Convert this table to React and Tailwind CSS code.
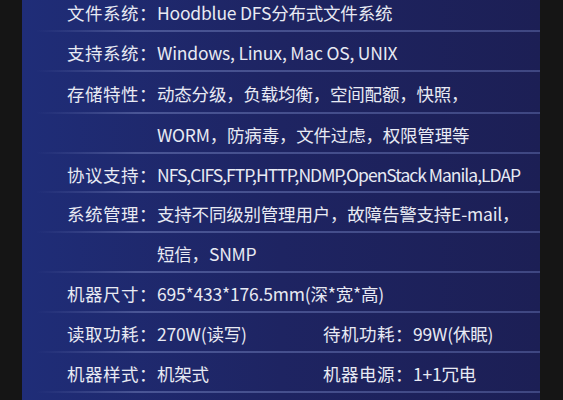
import React from "react";

const Row = ({ children, h = "h-[40px]" }) => (
  <div className={`relative ${h} flex items-center pt-[2px]`}>
    <div className="flex items-center pl-[45px] text-[17.5px] leading-[22px] text-[#e8eaf3] whitespace-nowrap">
      {children}
    </div>
    <div className="absolute left-[14px] right-0 bottom-0 h-[2px] bg-gradient-to-r from-transparent via-[#6673b0]/60 via-20% to-[#5b67a6]/55" />
  </div>
);

const Label = ({ children }) => (
  <span className="w-[90px] shrink-0 tracking-[0.5px]">{children}</span>
);

const Val = ({ children, cls = "" }) => (
  <span className={`tracking-[-0.2px] ${cls}`}>{children}</span>
);

export default function App() {
  return (
    <div
      className="w-[563px] h-[400px] overflow-hidden bg-[#151515] flex"
      style={{ fontFamily: '"Noto Sans CJK SC", "Noto Sans", sans-serif' }}
    >
      <div className="ml-[22px] w-[518px] h-full bg-gradient-to-r from-[#1f2d78] via-[#1e2462] to-[#1c1f55] flex flex-col">
        <div className="-mt-[8px]">
          <Row><Label>文件系统：</Label><Val>Hoodblue DFS分布式文件系统</Val></Row>
          <Row><Label>支持系统：</Label><Val>Windows, Linux, Mac OS, UNIX</Val></Row>
          <Row h="h-[42px]"><Label>存储特性：</Label><Val>动态分级，负载均衡，空间配额，快照，</Val></Row>
          <Row><Label></Label><Val>WORM，防病毒，文件过虑，权限管理等</Val></Row>
          <Row h="h-[39px]"><Label>协议支持：</Label><Val cls="!tracking-[-1px]">NFS,CIFS,FTP,HTTP,NDMP,OpenStack Manila,LDAP</Val></Row>
          <Row><Label>系统管理：</Label><Val>支持不同级别管理用户，故障告警支持E-mail，</Val></Row>
          <Row><Label></Label><Val>短信，SNMP</Val></Row>
          <Row><Label>机器尺寸：</Label><Val>695*433*176.5mm(深*宽*高)</Val></Row>
          <Row>
            <Label>读取功耗：</Label><Val cls="w-[166px]">270W(读写)</Val>
            <Label>待机功耗：</Label><Val>99W(休眠)</Val>
          </Row>
          <Row>
            <Label>机器样式：</Label><Val cls="w-[166px]">机架式</Val>
            <Label>机器电源：</Label><Val>1+1冗电</Val>
          </Row>
        </div>
      </div>
    </div>
  );
}
